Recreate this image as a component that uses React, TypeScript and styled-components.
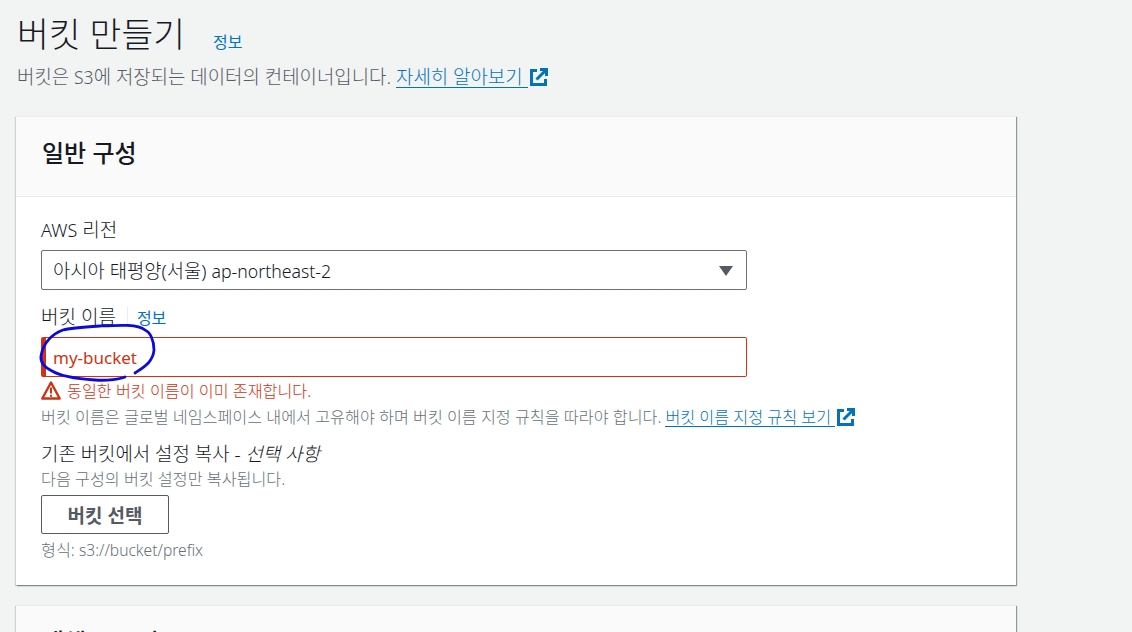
import React from "react";
import styled, { createGlobalStyle } from "styled-components";

const Global = createGlobalStyle`
  html, body { margin: 0; padding: 0; height: 632px; overflow: hidden; background: #f2f3f3; }
  body { font-family: "Noto Sans", "Noto Sans CJK KR", sans-serif; color: #16191f; }
  * { box-sizing: border-box; }
`;

const Page = styled.main`
  height: 632px;
  overflow: hidden;
  padding: 11px 116px 0 16px;
`;

const TitleRow = styled.div`
  display: flex;
  align-items: flex-end;
  height: 46px;
  padding-left: 1px;
`;

const Title = styled.h1`
  margin: 0;
  font-size: 34.6px;
  line-height: 46px;
  font-weight: 300;
  color: #16191f;
`;

const InfoLink = styled.a<{ $left: number }>`
  font-size: 16px;
  line-height: 18px;
  font-weight: 400;
  color: #0073bb;
  margin-left: ${(p) => p.$left}px;
`;

const TitleInfo = styled(InfoLink)`
  margin-bottom: 6px;
`;

const Latin = styled.span<{ $size: number }>`
  font-size: ${(p) => p.$size}px;
`;

const Lead = styled.p`
  margin: 8px 0 0 1px;
  font-size: 18.9px;
  line-height: 24px;
  font-weight: 300;
  color: #545b64;
  display: flex;
  align-items: center;
`;

const ExtLink = styled.a`
  color: #0073bb;
  border-bottom: 1px solid #0073bb;
  line-height: 20px;
  display: inline-block;
  margin-left: 5px;
`;

const Ext = styled.svg<{ $size: number }>`
  width: ${(p) => p.$size}px;
  height: ${(p) => p.$size}px;
  margin-left: 2px;
  flex: none;
`;

const Panel = styled.section<{ $top: number }>`
  margin-top: ${(p) => p.$top}px;
  background: #fff;
  box-shadow: 1px 1px 1px 0 rgba(0, 28, 36, 0.3), 1px 1px 1px 0 rgba(0, 28, 36, 0.15), -1px 1px 1px 0 rgba(0, 28, 36, 0.15);
  border-top: 1px solid #eaeded;
`;

const PanelHead = styled.header`
  height: 80px;
  background: #fafafa;
  border-bottom: 1px solid #eaeded;
  padding: 18px 26px 0;
`;

const PanelTitle = styled.h2`
  margin: 0;
  font-size: 24px;
  line-height: 36px;
  font-weight: 500;
  color: #16191f;
`;

const PanelBody = styled.div`
  padding: 21px 25px 24px;
  height: 388px;
`;

const Label = styled.div`
  font-size: 19px;
  line-height: 24px;
  font-weight: 300;
  color: #16191f;
  display: flex;
  align-items: center;
`;

const Select = styled.div`
  margin-top: 8px;
  width: 706px;
  height: 40px;
  border: 1px solid #687078;
  border-radius: 2px;
  padding: 0 11px;
  display: flex;
  align-items: center;
  justify-content: space-between;
  font-size: 18.8px;
  font-weight: 300;
  color: #16191f;
`;

const Caret = styled.svg`
  width: 14px;
  height: 12px;
  margin-top: 2px;
  margin-right: 2px;
`;

const Divider = styled.span`
  width: 1px;
  height: 20px;
  background: #eaeded;
  margin-left: 11px;
`;

const NameLabel = styled(Label)`
  margin-top: 15px;
`;

const NameInfo = styled(InfoLink)`
  margin-top: 2px;
`;

const FieldWrap = styled.div`
  position: relative;
  margin-top: 8px;
  width: 706px;
`;

const TextField = styled.div`
  height: 40px;
  border: 1px solid #d13212;
  border-left-width: 5px;
  border-radius: 2px;
  padding-left: 7px;
  display: flex;
  align-items: center;
  font-size: 17px;
  color: #d13212;
`;

const Scribble = styled.svg`
  position: absolute;
  left: -1px;
  top: -12px;
  width: 116px;
  height: 56px;
  overflow: visible;
  pointer-events: none;
`;

const ErrorRow = styled.div`
  margin-top: 2px;
  display: flex;
  align-items: center;
  height: 22px;
  font-size: 16.2px;
  font-weight: 300;
  color: #d13212;
`;

const Warn = styled.svg`
  width: 20px;
  height: 19px;
  margin-right: 6px;
  flex: none;
`;

const Hint = styled.div<{ $top?: number }>`
  margin-top: ${(p) => p.$top ?? 0}px;
  font-size: 16.2px;
  line-height: 22px;
  font-weight: 300;
  color: #687078;
  display: flex;
  align-items: center;
`;

const HintLink = styled(ExtLink)`
  line-height: 18px;
  margin-left: 4px;
`;

const CopyLabel = styled(Label)`
  margin-top: 14px;
  font-size: 18.9px;
`;

const Optional = styled.i`
  font-style: italic;
`;

const Button = styled.button`
  display: block;
  margin-top: 5px;
  width: 128px;
  height: 39px;
  background: #fff;
  border: 1px solid #545b64;
  border-radius: 2px;
  font-family: inherit;
  font-size: 19px;
  font-weight: 700;
  color: #545b64;
  padding: 0;
`;

const ExternalIcon = ({ size }: { size: number }) => (
  <Ext $size={size} viewBox="0 0 18 18" fill="none" stroke="#0073bb">
    <path d="M7 2.5H1.5v14h14V11" strokeWidth="3" />
    <path d="M6.5 11.5L15 3" strokeWidth="3" />
    <path d="M10 1.5h6.5V8" strokeWidth="3" />
  </Ext>
);

export default function App() {
  return (
    <>
      <Global />
      <Page>
        <TitleRow>
          <Title>버킷 만들기</Title>
          <TitleInfo $left={28}>정보</TitleInfo>
        </TitleRow>
        <Lead>
          <span>
            버킷은 <Latin $size={17.5}>S3</Latin>에 저장되는 데이터의 컨테이너입니다.
          </span>
          <ExtLink>자세히 알아보기&nbsp;</ExtLink>
          <ExternalIcon size={18} />
        </Lead>
        <Panel $top={27}>
          <PanelHead>
            <PanelTitle>일반 구성</PanelTitle>
          </PanelHead>
          <PanelBody>
            <Label>
              <span>
                <Latin $size={18}>AWS</Latin> 리전
              </span>
            </Label>
            <Select>
              <span>
                아시아 태평양(서울) <Latin $size={17.7}>ap-northeast-2</Latin>
              </span>
              <Caret viewBox="0 0 14 12">
                <path d="M0 1h14L7 11z" fill="#545b64" />
              </Caret>
            </Select>
            <NameLabel>
              버킷 이름
              <Divider />
              <NameInfo $left={9}>정보</NameInfo>
            </NameLabel>
            <FieldWrap>
              <TextField>my-bucket</TextField>
              <Scribble viewBox="0 0 116 56" fill="none">
                <path
                  d="M95 48C104 42 113 37 114 25C114 15 110 7 105 5C98 -1 80 0 60 1C45 2 30 3 23 5C12 9 3 18 1 31C0 38 6 43 12 46C22 52 40 54 55 55C68 56 80 54 85 52"
                  stroke="#0a0adf"
                  strokeWidth="2.8"
                  strokeLinecap="round"
                />
              </Scribble>
            </FieldWrap>
            <ErrorRow>
              <Warn viewBox="0 0 20 19">
                <path d="M10 1.5L18.7 17.5H1.3z" fill="none" stroke="#d13212" strokeWidth="2.4" strokeLinejoin="round" />
                <path d="M10 6.5v6M10 13.8v2" stroke="#d13212" strokeWidth="2" />
              </Warn>
              동일한 버킷 이름이 이미 존재합니다.
            </ErrorRow>
            <Hint $top={5}>
              <span>버킷 이름은 글로벌 네임스페이스 내에서 고유해야 하며 버킷 이름 지정 규칙을 따라야 합니다.</span>
              <HintLink>버킷 이름 지정 규칙 보기&nbsp;</HintLink>
              <ExternalIcon size={18} />
            </Hint>
            <CopyLabel>
              <span>
                기존 버킷에서 설정 복사 - <Optional>선택 사항</Optional>
              </span>
            </CopyLabel>
            <Hint $top={2}>다음 구성의 버킷 설정만 복사됩니다.</Hint>
            <Button>버킷 선택</Button>
            <Hint $top={5}>
              <span>
                형식: <Latin $size={15.6}>s3://bucket/prefix</Latin>
              </span>
            </Hint>
          </PanelBody>
        </Panel>
        <Panel $top={20}>
          <PanelHead>
            <PanelTitle>객체 소유권</PanelTitle>
          </PanelHead>
        </Panel>
      </Page>
    </>
  );
}
